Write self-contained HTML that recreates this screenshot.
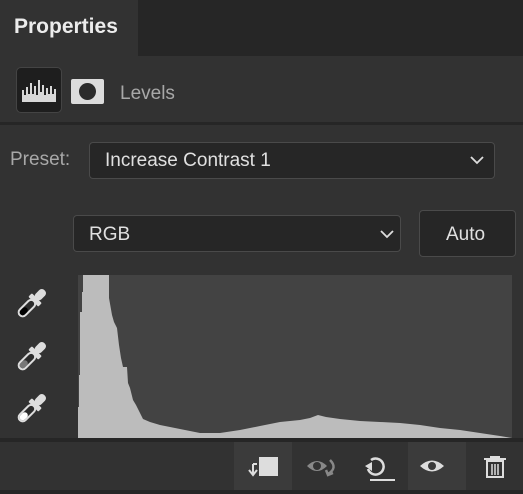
<!DOCTYPE html>
<html><head><style>
body{margin:0;width:523px;height:494px;background:#323232;font-family:"Liberation Sans",sans-serif;position:relative;overflow:hidden}
.a{position:absolute}
.sel{position:absolute;background:#262626;border:1px solid #4a4a4a;border-radius:4px;color:#e0e0e0;font-size:19px;box-sizing:border-box}
</style></head><body>
<div class="a" style="left:0;top:0;width:523px;height:56px;background:#262626"></div>
<div class="a" style="left:0;top:0;width:138px;height:56px;background:#323232"></div>
<div class="a" style="left:14px;top:15px;color:#ececec;font-weight:bold;font-size:21px">Properties</div>
<div class="a" style="left:16px;top:67px;width:46px;height:46px;background:#1e1e1e;border:1px solid #444;border-radius:5px;box-sizing:border-box"></div>
<svg class="a" style="left:21px;top:78px" width="38" height="26"><path d="M1 24V12h2v5h2V9h2v7h2V5h2v11h2V8h2v9h2V2h2v12h2V7h2v10h2V10h2v6h2V8h2v8h2V11h2v13z" fill="#d8d8d8"/></svg>
<div class="a" style="left:71px;top:79px;width:33px;height:25px;background:#dcdcdc;border-radius:2px"></div>
<div class="a" style="left:79px;top:83px;width:17px;height:17px;background:#2b2b2b;border-radius:50%"></div>
<div class="a" style="left:120px;top:83px;color:#a8a8a8;font-size:19px">Levels</div>
<div class="a" style="left:0;top:122px;width:523px;height:3px;background:#262626"></div>
<div class="a" style="left:10px;top:149px;color:#a8a8a8;font-size:19px">Preset:</div>
<div class="sel" style="left:89px;top:142px;width:406px;height:37px;padding:7px 0 0 15px">Increase Contrast 1</div>
<svg class="a" style="left:470px;top:155px" width="14" height="10"><path d="M1 2l6 6 6-6" stroke="#ddd" stroke-width="1.8" fill="none"/></svg>
<div class="sel" style="left:73px;top:215px;width:328px;height:37px;padding:8px 0 0 15px">RGB</div>
<svg class="a" style="left:380px;top:229px" width="14" height="10"><path d="M1 2l6 6 6-6" stroke="#ddd" stroke-width="1.8" fill="none"/></svg>
<div class="sel" style="left:419px;top:210px;width:97px;height:47px;padding:13px 0 0 26px">Auto</div>
<svg class="a" style="left:0;top:270px" width="523" height="175">
<rect x="78" y="5" width="434" height="163" fill="#434343"/>
<polygon fill="#bcbcbc" points="78,168 78,137 79,137 79,105 80,105 80,42 82,42 82,22 83,22 83,5 109,5 109,28 112,45 114,52 117,58 119,75 121,88 123,97 127,97 128,113 130,118 133,130 136,135 140,143 143,149 150,152 160,155 170,157 185,160 200,163 220,163 240,160 260,156 280,152 300,150 310,148 318,145 326,147 340,149 360,151 380,152 400,153 420,155 440,158 460,160 480,163 500,166 512,168"/>
<g id="ed">
<g transform="translate(34,31) rotate(-45)">
<rect x="-20" y="-4" width="20" height="8" rx="4" fill="#2b2b2b" stroke="#ddd" stroke-width="2"/>
<rect x="-1" y="-7" width="5" height="14" rx="1" fill="#ddd"/>
<rect x="3" y="-4" width="12" height="8" rx="3.5" fill="#ddd"/>
</g></g>
<use href="#ed" transform="translate(0,53)"/>
<use href="#ed" transform="translate(0,105)"/>
<g transform="translate(34,31) rotate(-45)"><rect x="-19" y="-3" width="9" height="6" rx="3" fill="#000"/></g>
<g transform="translate(34,84) rotate(-45)"><rect x="-19" y="-3" width="9" height="6" rx="3" fill="#777"/></g>
<g transform="translate(34,136) rotate(-45)"><rect x="-19" y="-3" width="9" height="6" rx="3" fill="#fff"/></g>
</svg>
<div class="a" style="left:0;top:438px;width:523px;height:4px;background:#262626"></div>
<div class="a" style="left:234px;top:442px;width:58px;height:48px;background:#3b3b3b"></div>
<div class="a" style="left:408px;top:442px;width:58px;height:48px;background:#3b3b3b"></div>
<div class="a" style="left:0;top:490px;width:523px;height:4px;background:#262626"></div>
<svg class="a" style="left:234px;top:442px" width="289" height="48">
<path d="M19 22v10M15 28l4 5 4-5M19 22h4" stroke="#ddd" stroke-width="2" fill="none"/>
<rect x="25" y="15" width="19" height="19" fill="#ddd"/>
<path d="M73 24q10-10 20 0q-10 10-20 0z" fill="#888"/><circle cx="83" cy="24" r="4" fill="#323232"/>
<path d="M96 18q8 8-2 14M92 28l2 5 5-2" stroke="#888" stroke-width="2.5" fill="none"/>
<path d="M134 27a8 8 0 1 0 3-9" stroke="#ddd" stroke-width="2.5" fill="none"/><path d="M131 24l7-4v9z" fill="#ddd"/>
<rect x="136" y="37" width="25" height="2" fill="#ddd"/>
<path d="M186 24q12-11 24 0q-12 11-24 0z" fill="#ddd"/><circle cx="198" cy="24" r="4" fill="#3b3b3b"/>
<path d="M250 17h22M257 17v-2h8v2" stroke="#ddd" stroke-width="2" fill="none"/>
<path d="M253 19h16v16h-16z" stroke="#ddd" stroke-width="2" fill="none"/>
<path d="M258 22v11M261 22v11M264 22v11" stroke="#ddd" stroke-width="1.5"/>
</svg>
</body></html>
